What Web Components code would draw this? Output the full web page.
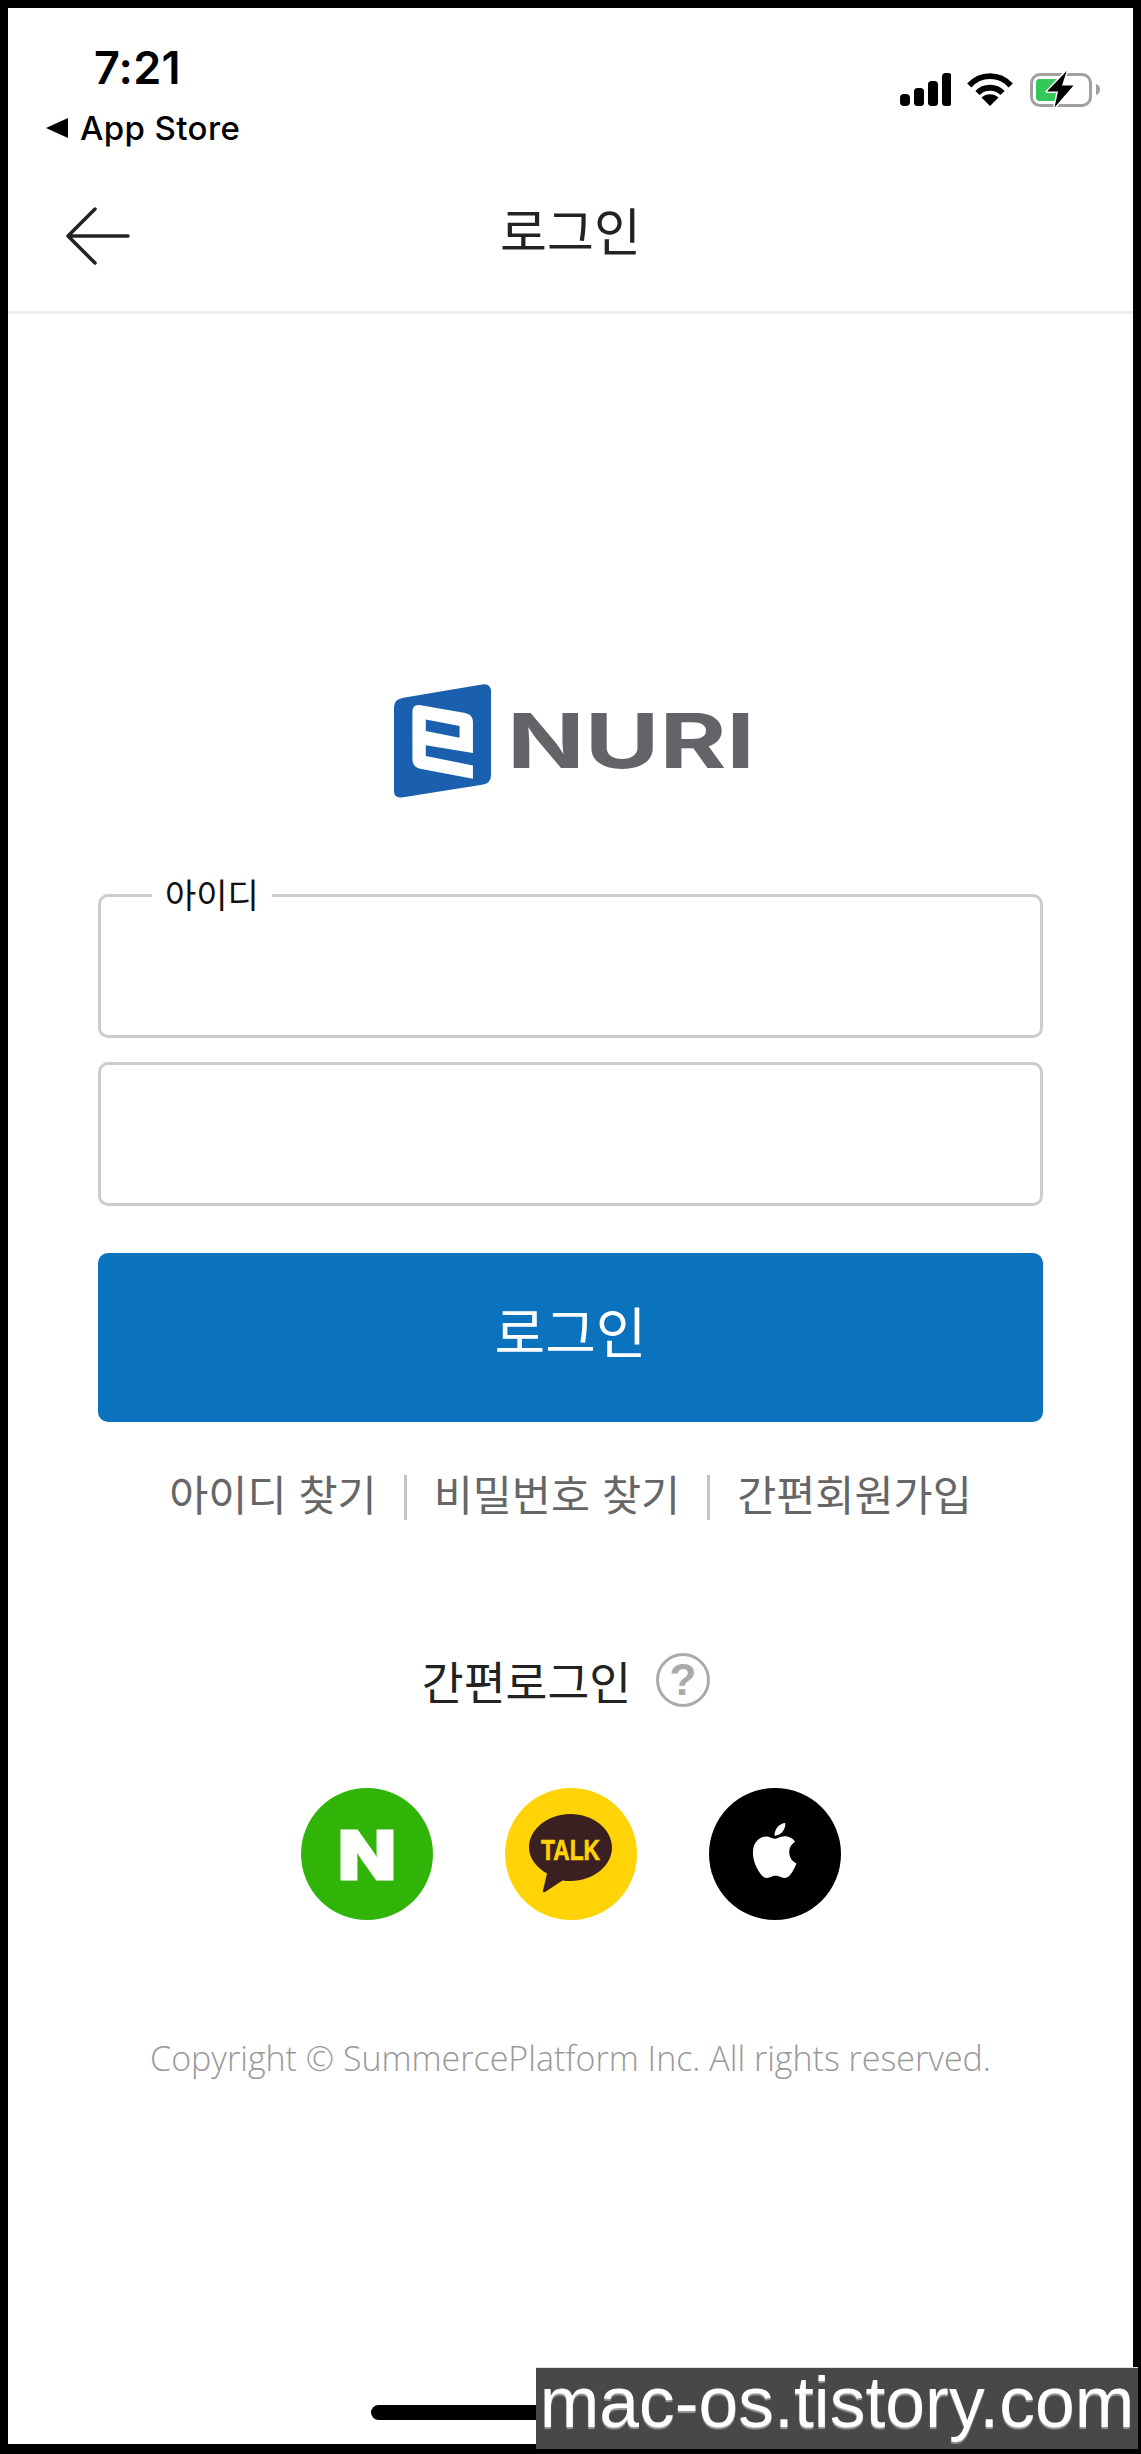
<!DOCTYPE html>
<html lang="ko">
<head>
<meta charset="utf-8">
<title>로그인</title>
<style>
html,body{margin:0;padding:0;background:#000}
body{font-family:"Noto Sans CJK KR","Noto Sans",sans-serif}
</style>
</head>
<body>
<phone-frame>
  <status-bar></status-bar>
  <nav-header>로그인</nav-header>
  <login-main>
    <brand-logo></brand-logo>
    <text-field label="아이디"></text-field>
    <text-field type="password"></text-field>
    <primary-button>로그인</primary-button>
    <link-row></link-row>
    <sns-login></sns-login>
    <copy-right>Copyright © SummercePlatform Inc. All rights reserved.</copy-right>
  </login-main>
  <home-bar></home-bar>
  <water-mark>mac-os.tistory.com</water-mark>
</phone-frame>
<script>
function def(name,html){
  customElements.define(name,class extends HTMLElement{
    constructor(){super();this.attachShadow({mode:'open'});}
    connectedCallback(){const t=document.createElement('template');t.innerHTML=typeof html==='function'?html(this):html;this.shadowRoot.replaceChildren(t.content.cloneNode(true));}
  });
}
const KR='"Noto Sans CJK KR","Noto Sans",sans-serif';
def('phone-frame',`<style>
:host{display:flex;flex-direction:column;position:relative;box-sizing:border-box;width:1141px;height:2454px;background:#fff;border:solid #000;border-width:8px 8px 10px 8px;overflow:visible}
</style><slot></slot>`);
def('status-bar',`<style>
:host{display:flex;justify-content:space-between;height:142px;font-family:Inter,"Liberation Sans",sans-serif;color:#000}
.left{display:flex;flex-direction:column;padding:38px 0 0 38px}
.time{font-size:45px;line-height:44px;font-weight:600;padding-left:48px;letter-spacing:.2px}
.back{display:flex;align-items:center;gap:12px;font-size:33px;line-height:40px;margin-top:18px;font-weight:500;letter-spacing:.4px}
.icons{display:flex;align-items:flex-start;padding:64px 33px 0 0}
svg{display:block}
</style>
<div class="left"><div class="time">7:21</div>
<div class="back"><svg width="22" height="20" viewBox="0 0 22 20"><path d="M0 10 22 0V20Z" fill="#000"/></svg><span>App Store</span></div></div>
<div class="icons">
<svg width="51" height="33" viewBox="0 0 51 33" style="margin-top:1px" fill="#000"><rect x="0" y="21" width="10" height="12" rx="4"/><rect x="14" y="15" width="10" height="18" rx="3.5"/><rect x="28" y="8" width="10" height="25" rx="3.5"/><rect x="42" y="0" width="9.500" height="33" rx="3.5"/></svg>
<svg width="46" height="34" viewBox="0 0 46 34" style="margin:0 17px 0 16px" fill="none" stroke="#000" stroke-width="5.800"><path d="M2.300 13.500C13.500 1 32.500 1 43.700 13.500"/><path d="M10.500 21C17 14 29 14 35.500 21"/><path fill="#000" stroke="none" d="M14.500 25.500C19 21 27 21 31.500 25.500L23 34Z"/></svg>
<svg width="70" height="37" viewBox="0 0 70 37" style="margin-top:-1px"><rect x="1.500" y="3.500" width="59" height="31" rx="8.500" fill="none" stroke="#a0a0a0" stroke-width="3"/><rect x="6" y="8" width="27" height="22" rx="3.500" fill="#34c759"/><path d="M66 13c2.500.6 4 2.800 4 5.500S68.500 23.400 66 24Z" fill="#a0a0a0"/><path d="M36.700 0 17 20.500H28L24.500 36.500 43.500 14.500H32Z" fill="#000" stroke="#fff" stroke-width="3" paint-order="stroke" stroke-linejoin="round"/></svg>
</div>`);
def('nav-header',`<style>
:host{display:flex;position:relative;align-items:center;justify-content:center;height:161px;border-bottom:3px solid #eee;font-size:51px;color:#222;font-family:${KR}}
svg{position:absolute;left:58px;top:57px}
span{position:relative;top:-2px}
</style>
<svg width="64" height="58" viewBox="0 0 64 58" fill="none" stroke="#222" stroke-width="3.500" stroke-linecap="round" stroke-linejoin="round"><path d="M29 2 2 29 29 56M2 29H62"/></svg>
<span><slot></slot></span>`);
def('login-main',`<style>
:host{display:flex;flex-direction:column;align-items:stretch;padding:370px 90px 0 90px}
</style><slot></slot>`);
def('brand-logo',`<style>
:host{display:flex;justify-content:center;align-items:flex-start;gap:21px;height:114px;margin-bottom:96px;padding-right:1px}
svg{display:block;overflow:visible}
</style>
<svg width="97" height="114" viewBox="72 72 290 340"><path fill="#1a60ae" d="M72 140Q72 118 100 113L335 73Q362 68 362 95V345Q362 368 335 373L100 410Q72 416 72 390Z"/><path fill="#fff" fill-rule="evenodd" d="M127 155Q127 130 152 135L285 158Q308 163 308 185V278L167 255V287L308 315V355L150 325Q127 320 127 295ZM167 178 268 197V232L167 212Z"/></svg>
<svg width="235" height="114" viewBox="0 0 235 114"><text x="-5" y="84" font-family="Inter" font-weight="700" font-size="76" fill="#636467" textLength="248" lengthAdjust="spacingAndGlyphs">NURI</text></svg>`);
def('text-field',(el)=>{const l=el.getAttribute('label');const ty=el.getAttribute('type')||'text';return `<style>
:host{display:block;position:relative;box-sizing:border-box;height:144px;border:3px solid #ccc;border-radius:10px;margin-bottom:24px;background:#fff}
input{display:block;width:100%;height:100%;box-sizing:border-box;border:0;outline:0;background:transparent;padding:0 40px;border-radius:8px;font:36px ${KR}}
label{position:absolute;left:51px;top:-24px;padding:0 13px;background:#fff;font-size:34px;line-height:42px;color:#111;font-family:${KR}}
</style>${l?`<label>${l}</label>`:''}<input type="${ty}">`});
def('primary-button',`<style>
:host{display:flex;align-items:center;justify-content:center;height:169px;margin-top:23px;background:#0b72bd;border-radius:10px;color:#fff;font-size:55px;font-family:${KR}}
span{position:relative;top:-9px}
</style><span><slot></slot></span>`);
def('link-row',`<style>
:host{display:flex;justify-content:center;align-items:center;height:44px;margin-top:53px;color:#666;font-size:42.500px;font-family:${KR}}
i{display:block;width:3px;height:45px;background:#c4c4c4;margin:0 27px}
span{white-space:nowrap;line-height:44px;position:relative;top:-4px}
</style><span>아이디 찾기</span><i></i><span>비밀번호 찾기</span><i></i><span>간편회원가입</span>`);
def('sns-login',`<style>
:host{display:flex;flex-direction:column;align-items:center;margin-top:134px;font-family:${KR}}
.t{display:flex;align-items:center;gap:25px;height:54px;color:#222;font-size:45.500px;padding-right:9px}
.t svg{display:block}
.b{display:flex;gap:72px;margin-top:81px}
.c{display:flex;align-items:center;justify-content:center;width:132px;height:132px;border-radius:50%}
</style>
<div class="t"><span>간편로그인</span><svg width="54" height="54" viewBox="0 0 54 54"><circle cx="27" cy="27" r="25.500" fill="#fff" stroke="#aaa" stroke-width="3"/><text x="27" y="42" text-anchor="middle" font-family="Liberation Sans" font-weight="700" font-size="44" fill="#aaa">?</text></svg></div>
<div class="b">
<div class="c" style="background:#30b407"><svg width="100" height="80" viewBox="0 0 100 80"><text x="50" y="65" text-anchor="middle" font-family="Inter" font-weight="800" font-size="66" fill="#fff" stroke="#fff" stroke-width="3" textLength="58" lengthAdjust="spacingAndGlyphs">N</text></svg></div>
<div class="c" style="background:#ffd306"><svg width="100" height="80" viewBox="-8 0 100 80"><path fill="#3a2020" d="M41.500 0C64 0 83 15 83 33.500 83 52 64 67 41.500 67 39 67 36.500 66.800 33.500 66.400L16 78C14.500 78.800 13.500 78 14 76.500L18 59.500C6.500 53 0 43.500 0 33.500 0 15 19 0 41.500 0Z"/><text x="41.500" y="46" text-anchor="middle" font-family="Liberation Sans" font-weight="700" font-size="30" fill="#ffd306" stroke="#ffd306" stroke-width=".7" textLength="59" lengthAdjust="spacingAndGlyphs">TALK</text></svg></div>
<div class="c" style="background:#000"><svg width="44" height="55" viewBox="3.900 2 16.400 20" preserveAspectRatio="none" style="margin-bottom:7px"><path fill="#fff" d="M18.710 19.500c-.83 1.240-1.710 2.450-3.050 2.470-1.340.03-1.770-.79-3.290-.79-1.530 0-2 .77-3.270.82-1.310.05-2.300-1.320-3.140-2.530C4.250 17 2.940 12.450 4.700 9.390c.87-1.520 2.430-2.480 4.120-2.510 1.280-.02 2.500.87 3.290.87.780 0 2.260-1.070 3.810-.91.650.03 2.470.260 3.640 1.980-.09.060-2.170 1.280-2.150 3.810.03 3.020 2.650 4.030 2.680 4.040-.03.070-.42 1.440-1.380 2.830M13 3.500c.730-.83 1.940-1.460 2.940-1.500.13 1.170-.34 2.350-1.040 3.190-.69.850-1.830 1.510-2.950 1.420-.15-1.150.41-2.350 1.050-3.110z"/></svg></div>
</div>`);
def('copy-right',`<style>
:host{display:block;text-align:center;margin-top:116px;color:#999;font-size:34px;line-height:44px;font-weight:300;font-family:"Open Sans","Noto Sans",sans-serif;white-space:nowrap}
</style><slot></slot>`);
def('home-bar',`<style>
:host{display:block;width:400px;height:15px;background:#000;border-radius:8px;margin:auto auto 24px}
</style>`);
def('water-mark',`<style>
:host{position:absolute;right:-5px;bottom:-5px;box-sizing:border-box;width:602px;height:82px;background:#484848;color:#fff;border-top:1px solid #ddd;font-family:"Liberation Sans",sans-serif;font-size:71.500px;line-height:68px;text-align:center;white-space:nowrap;text-shadow:0 2px 1px #999}
</style><slot></slot>`);
</script>
</body>
</html>
